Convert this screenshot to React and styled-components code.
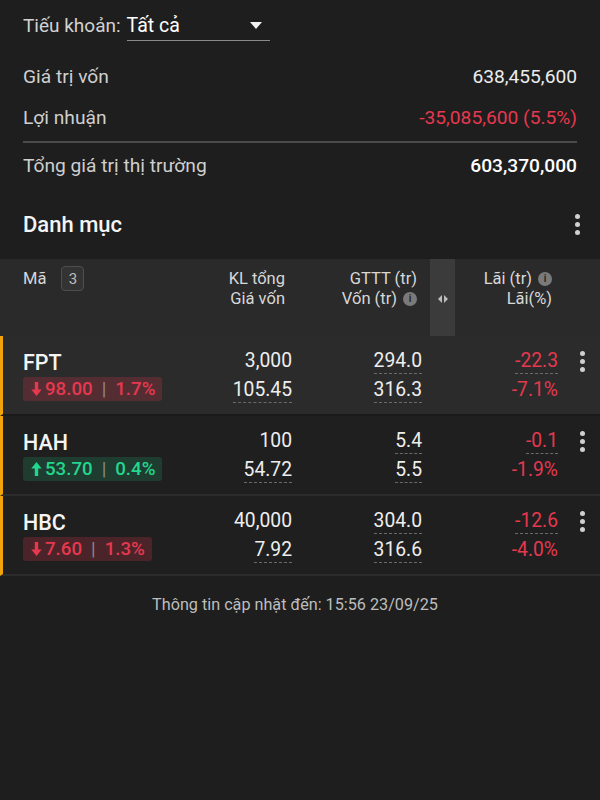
import React from 'react'
import styled, { createGlobalStyle } from 'styled-components'

const RED = '#e6384f'
const GREEN = '#22d68e'

const GlobalStyle = createGlobalStyle`
  body{
    margin:0;
    background:#1e1e1e;
    font-family:Roboto, "Noto Sans", "Liberation Sans", sans-serif;
    color:#f2f2f2;
  }
`

const stocks = [
  { code: 'FPT', up: false, price: '98.00', pct: '1.7%', kl: '3,000', gv: '105.45', gttt: '294.0', von: '316.3', lai: '-22.3', laiPct: '-7.1%', active: true },
  { code: 'HAH', up: true, price: '53.70', pct: '0.4%', kl: '100', gv: '54.72', gttt: '5.4', von: '5.5', lai: '-0.1', laiPct: '-1.9%' },
  { code: 'HBC', up: false, price: '7.60', pct: '1.3%', kl: '40,000', gv: '7.92', gttt: '304.0', von: '316.6', lai: '-12.6', laiPct: '-4.0%' },
]

function Kebab() {
  return (
    <Dots>
      <i /><i /><i />
    </Dots>
  )
}

function Arrow({ up }) {
  return (
    <svg width="11" height="14" viewBox="0 0 11 14" style={{ transform: up ? 'rotate(180deg)' : 'none' }}>
      <path d="M3.8 0h3.4v7.5h3.5L5.5 14 0.3 7.5h3.5z" fill="currentColor" />
    </svg>
  )
}

function App() {
  return (
    <Page>
      <GlobalStyle />
      <Top>
        <SubRow>
          <span>Tiếu khoản:</span>
          <Select>
            Tất cả
            <Caret />
          </Select>
        </SubRow>
        <Summary>
          <SumRow>
            <Label>Giá trị vốn</Label>
            <Value>638,455,600</Value>
          </SumRow>
          <SumRow>
            <Label>Lợi nhuận</Label>
            <Value color={RED}>-35,085,600 (5.5%)</Value>
          </SumRow>
          <Divider />
          <SumRow tall>
            <Label>Tổng giá trị thị trường</Label>
            <Value bold>603,370,000</Value>
          </SumRow>
        </Summary>
      </Top>

      <SectionHead>
        <h2>Danh mục</h2>
        <Kebab />
      </SectionHead>

      <HeadGrid>
        <HeadCell left>
          <NameHead>Mã <Count>3</Count></NameHead>
        </HeadCell>
        <HeadCell>
          <span>KL tổng</span>
          <span>Giá vốn</span>
        </HeadCell>
        <HeadCell>
          <span>GTTT (tr)</span>
          <span>Vốn (tr) <Info>i</Info></span>
        </HeadCell>
        <div />
        <Handle>
          <svg width="10" height="8" viewBox="0 0 10 8">
            <path d="M4 0v8L0 4z M6 0v8l4-4z" fill="#bdbdbd" />
          </svg>
        </Handle>
        <HeadCell>
          <span>Lãi (tr) <Info>i</Info></span>
          <span>Lãi(%)</span>
        </HeadCell>
        <div />
      </HeadGrid>

      {stocks.map((s) => (
        <Row key={s.code} active={s.active}>
          <NameCell>
            <Code>{s.code}</Code>
            <Change up={s.up}>
              <Arrow up={s.up} />
              <span>{s.price}</span>
              <Bar>|</Bar>
              <span>{s.pct}</span>
            </Change>
          </NameCell>
          <Cell>
            <Num>{s.kl}</Num>
            <Num dashed>{s.gv}</Num>
          </Cell>
          <Cell>
            <Num dashed>{s.gttt}</Num>
            <Num dashed>{s.von}</Num>
          </Cell>
          <Cell>
            <Num dashed color={RED}>{s.lai}</Num>
            <Num color={RED}>{s.laiPct}</Num>
          </Cell>
          <MenuCell>
            <Kebab />
          </MenuCell>
        </Row>
      ))}

      <Footer>Thông tin cập nhật đến: 15:56 23/09/25</Footer>
    </Page>
  )
}

const Page = styled.div`
  width:600px;
  min-height:800px;
  background:#1e1e1e;
`

const Top = styled.div`
  padding:0 23px;
`

const SubRow = styled.div`
  height:50px;
  display:flex;
  align-items:center;
  gap:6px;
  font-size:19px;
  color:#d2d2d2;
`

const Select = styled.div`
  width:143px;
  height:30px;
  box-sizing:border-box;
  margin-top:2px;
  display:flex;
  align-items:center;
  justify-content:space-between;
  padding-right:8px;
  border-bottom:1px solid #8a8a8a;
  color:#fff;
  font-size:19.5px;
`

const Caret = styled.span`
  width:0;
  height:0;
  border-left:6.5px solid transparent;
  border-right:6.5px solid transparent;
  border-top:7px solid #f2f2f2;
`

const Summary = styled.div`
  margin-top:6px;
  display:flex;
  flex-direction:column;
`

const SumRow = styled.div`
  height:${(p) => (p.tall ? 44 : 41)}px;
  display:flex;
  align-items:center;
  justify-content:space-between;
  font-size:19.2px;
`

const Label = styled.span`
  color:#cfcfcf;
`

const Value = styled.span`
  color:${(p) => p.color || '#ececec'};
  font-weight:${(p) => (p.bold ? 500 : 400)};
  ${(p) => p.bold && 'color:#fff;'}
`

const Divider = styled.div`
  height:2px;
  margin-top:3px;
  background:#4a4a4a;
`

const SectionHead = styled.div`
  height:72px;
  display:flex;
  align-items:center;
  justify-content:space-between;
  padding:2px 20px 0 23px;
  box-sizing:border-box;
  h2{
    margin:0;
    font-size:22px;
    font-weight:500;
    color:#f4f4f4;
  }
`

const Dots = styled.div`
  display:flex;
  flex-direction:column;
  align-items:center;
  gap:3px;
  i{
    width:5px;
    height:5px;
    border-radius:50%;
    background:#d0d0d0;
  }
`

const HeadGrid = styled.div`
  display:grid;
  grid-template-columns:1fr 92px 132px 13px 25px 97px 48px;
  height:77px;
  padding-left:23px;
  background:#2a2a2a;
`

const HeadCell = styled.div`
  display:flex;
  flex-direction:column;
  align-items:${(p) => (p.left ? 'flex-start' : 'flex-end')};
  padding-top:10px;
  font-size:16.5px;
  line-height:20px;
  color:#d8d8d8;
  span{
    display:flex;
    align-items:center;
    gap:6px;
  }
`

const NameHead = styled.div`
  display:flex;
  align-items:center;
  gap:15px;
  margin-top:-3px;
`

const Count = styled.span`
  width:23px;
  height:25px;
  box-sizing:border-box;
  display:flex;
  align-items:center;
  justify-content:center;
  border:1.5px solid #4e4e4e;
  border-radius:4px;
  background:#333;
  color:#bdbdbd;
  font-size:15px;
`

const Info = styled.i`
  width:14px;
  height:14px;
  border-radius:50%;
  background:#7a7a7a;
  color:#2a2a2a;
  font-size:10px;
  font-style:normal;
  font-weight:700;
  line-height:14px;
  text-align:center;
`

const Handle = styled.div`
  background:#3b3b3b;
  display:flex;
  align-items:center;
  justify-content:center;
  padding-top:2px;
`

const Row = styled.div`
  display:grid;
  grid-template-columns:1fr 92px 130px 136px 42px;
  height:78px;
  padding-left:20px;
  border-left:3px solid #f0a30a;
  border-bottom:2px solid ${(p) => (p.active ? '#1a1a1a' : '#2c2c2c')};
  background:${(p) => (p.active ? '#2b2b2b' : '#1f1f1f')};
  &:last-of-type{
    border-bottom-width:1px;
  }
`

const NameCell = styled.div`
  display:flex;
  flex-direction:column;
  align-items:flex-start;
  padding-top:12px;
`

const Code = styled.div`
  height:29px;
  line-height:29px;
  font-size:21.5px;
  font-weight:500;
  color:#f4f4f4;
`

const Change = styled.div`
  height:24px;
  display:flex;
  align-items:center;
  gap:3px;
  padding:0 7px 0 8px;
  border-radius:3px;
  font-size:18.7px;
  font-weight:500;
  color:${(p) => (p.up ? GREEN : RED)};
  background:${(p) => (p.up ? 'rgba(34,214,142,0.16)' : 'rgba(230,56,79,0.22)')};
`

const Bar = styled.span`
  color:#8a8a8a;
  font-weight:400;
  padding:0 6px;
`

const Cell = styled.div`
  display:flex;
  flex-direction:column;
  align-items:flex-end;
  padding-top:13px;
  gap:4px;
`

const Num = styled.span`
  height:24px;
  line-height:24px;
  font-size:19.3px;
  color:${(p) => p.color || '#eeeeee'};
  border-bottom:1px ${(p) => (p.dashed ? 'dashed #6a6a6a' : 'solid transparent')};
`

const MenuCell = styled.div`
  display:flex;
  justify-content:center;
  padding-left:6px;
  padding-top:15px;
`

const Footer = styled.div`
  height:56px;
  display:flex;
  align-items:center;
  justify-content:center;
  font-size:16.2px;
  color:#bdbdbd;
  padding-right:10px;
`

export default App
